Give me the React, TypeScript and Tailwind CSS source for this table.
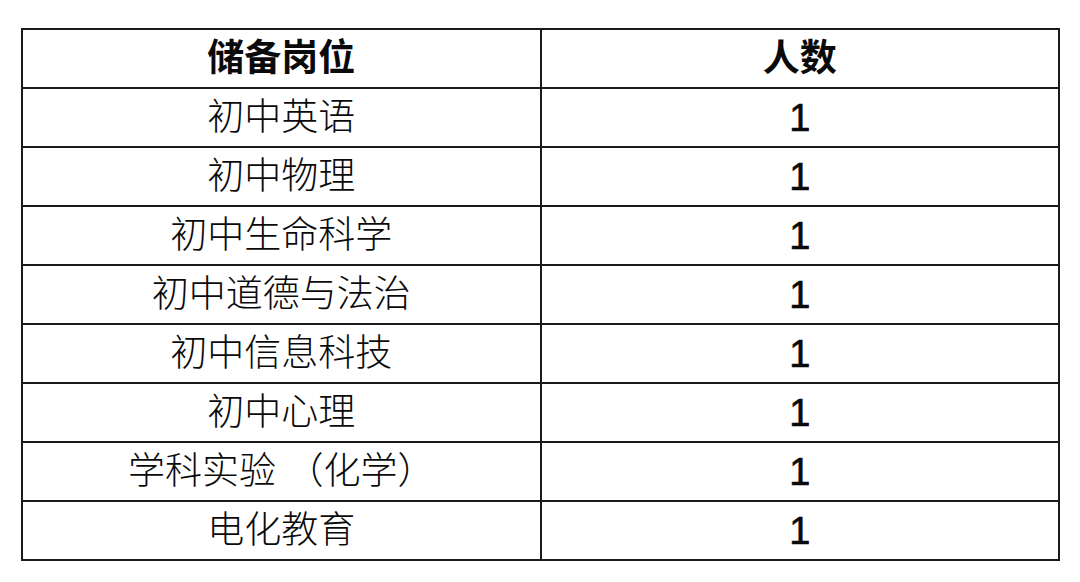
import React from "react";

const rows = [
  "初中英语",
  "初中物理",
  "初中生命科学",
  "初中道德与法治",
  "初中信息科技",
  "初中心理",
  "学科实验 （化学）",
  "电化教育",
];

export default function App() {
  return (
    <div className="w-[1080px] h-[582px] bg-white pt-[28px] pl-[21px]" style={{ fontFamily: '"Liberation Sans", "Noto Sans CJK SC", sans-serif' }}>
      <table className="border-collapse w-[1039px] text-[37px] text-[#0a0a0a] leading-none">
        <thead>
          <tr className="h-[59px]">
            <th className="border-2 border-[#1a1a1a] w-1/2 font-bold text-center align-middle">储备岗位</th>
            <th className="border-2 border-[#1a1a1a] w-1/2 font-bold text-center align-middle">人数</th>
          </tr>
        </thead>
        <tbody>
          {rows.map((r) => (
            <tr key={r} className="h-[59px]">
              <td className="border-2 border-[#1a1a1a] text-center align-middle whitespace-pre font-light">{r}</td>
              <td className="border-2 border-[#1a1a1a] text-center align-middle text-[38px] [-webkit-text-stroke:0.6px_#0a0a0a]">1</td>
            </tr>
          ))}
        </tbody>
      </table>
    </div>
  );
}
